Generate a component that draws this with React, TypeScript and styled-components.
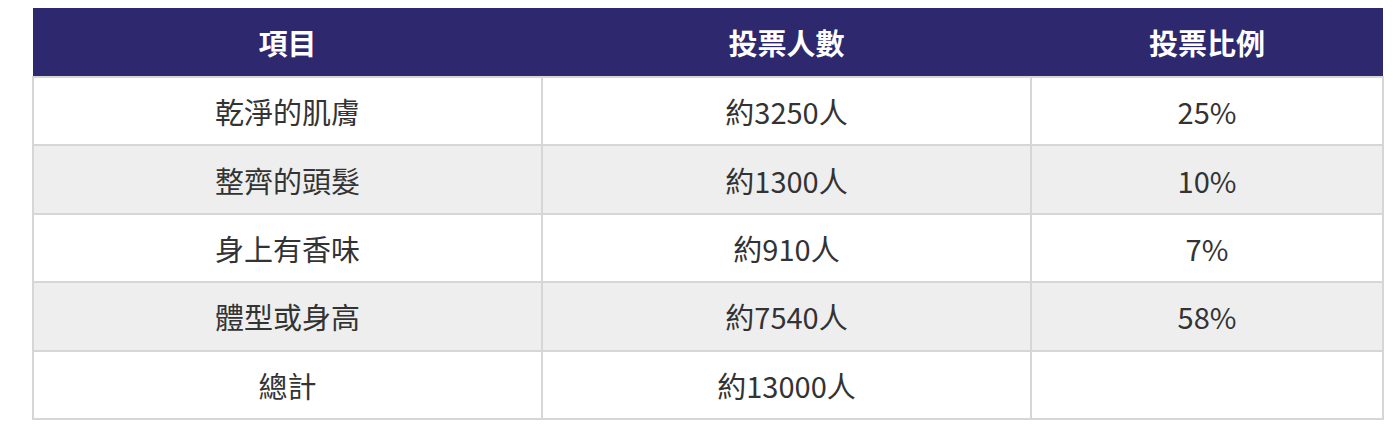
import React from "react";
import styled, { createGlobalStyle } from "styled-components";

interface Row {
  item: string;
  votes: string;
  ratio: string;
}

const rows: Row[] = [
  { item: "乾淨的肌膚", votes: "約3250人", ratio: "25%" },
  { item: "整齊的頭髮", votes: "約1300人", ratio: "10%" },
  { item: "身上有香味", votes: "約910人", ratio: "7%" },
  { item: "體型或身高", votes: "約7540人", ratio: "58%" },
  { item: "總計", votes: "約13000人", ratio: "" },
];

const GlobalStyle = createGlobalStyle`
  body {
    margin: 0;
    background: #ffffff;
    font-family: "Noto Sans CJK TC", "Noto Sans", sans-serif;
  }
`;

const Page = styled.div`
  padding: 8px 11px 0 32px;
`;

const Table = styled.table`
  width: 1350px;
  border-collapse: collapse;
  table-layout: fixed;
  color: #333333;
`;

const HeadCell = styled.th`
  height: 68px;
  padding: 0 8px;
  background: #2e286e;
  color: #ffffff;
  font-size: 29px;
  font-weight: 700;
  text-align: center;
  border: none;
`;

const BodyRow = styled.tr<{ $shaded: boolean }>`
  background: ${(p) => (p.$shaded ? "#eeeeee" : "#ffffff")};
`;

const Cell = styled.td`
  height: 68.4px;
  padding: 0 8px;
  font-size: 29px;
  line-height: 44px;
  text-align: center;
  border: 2px solid #d6d6d6;
  box-sizing: border-box;
`;

export default function App() {
  return (
    <Page>
      <GlobalStyle />
      <Table>
        <colgroup>
          <col style={{ width: 509 }} />
          <col style={{ width: 489 }} />
          <col style={{ width: 352 }} />
        </colgroup>
        <thead>
          <tr>
            <HeadCell>項目</HeadCell>
            <HeadCell>投票人數</HeadCell>
            <HeadCell>投票比例</HeadCell>
          </tr>
        </thead>
        <tbody>
          {rows.map((r, i) => (
            <BodyRow key={r.item} $shaded={i % 2 === 1}>
              <Cell>{r.item}</Cell>
              <Cell>{r.votes}</Cell>
              <Cell>{r.ratio}</Cell>
            </BodyRow>
          ))}
        </tbody>
      </Table>
    </Page>
  );
}
